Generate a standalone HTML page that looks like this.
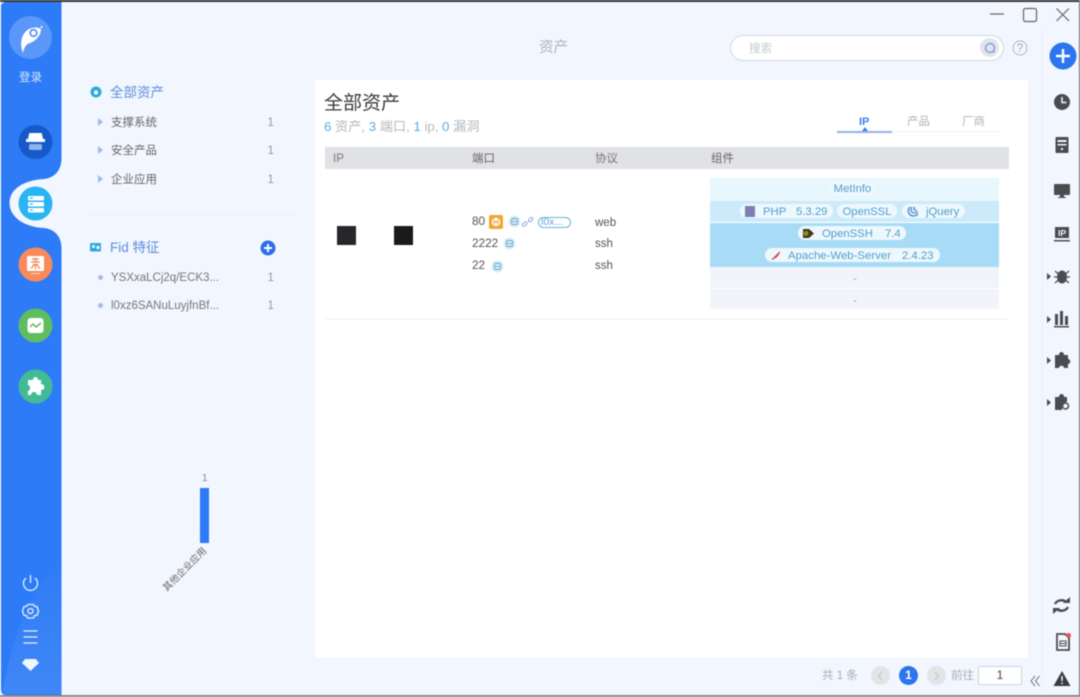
<!DOCTYPE html>
<html lang="zh"><head><meta charset="utf-8"><title>资产</title>
<style>
html,body{margin:0;padding:0;background:#f2f6fe}
body{width:1080px;height:697px;overflow:hidden;position:relative;font-family:"Liberation Sans","Noto Sans CJK SC",sans-serif;color:#5c5c5c}
#r{position:absolute;left:0;top:0;width:1080px;height:697px;overflow:hidden;background:#f2f6fe;filter:blur(.45px)}
.t{position:absolute;white-space:nowrap;line-height:16px;font-size:11.500px;margin-top:1px}
.a{position:absolute}
.c{border-radius:50%}
.pill{position:absolute;height:14px;background:#edf8fe;border-radius:7px;color:#4f9fca;font-size:11.300px;line-height:16px;white-space:nowrap;text-align:center}
svg{position:absolute;overflow:visible}
</style></head><body><div id="r">
<div class="a" style="left:0;top:0;width:1080px;height:2px;background:#333"></div>
<div class="a" style="left:0;top:695px;width:1080px;height:2px;background:#8a8a8a"></div>
<div class="a" style="left:1079px;top:0;width:1px;height:697px;background:#666"></div>
<div class="a" style="left:1042px;top:30px;width:1px;height:664px;background:#ebf0f8"></div>

<svg style="left:0;top:0" width="62" height="697" viewBox="0 0 62 697">
<defs><linearGradient id="w" x1="0" y1="0" x2="0" y2="1"><stop offset="0" stop-color="#fff" stop-opacity=".01"/><stop offset="1" stop-color="#fff" stop-opacity=".09"/></linearGradient></defs>
<path fill="#2d7bf6" d="M6 2H61.500V158C61.500 171 54 178 44 179C24 180 9.500 189 9.500 203C9.500 217 24 227 44 228C54 229 61.500 236 61.500 248V695H6Q1 695 1 689V7Q1 2 6 2Z"/>
<path fill="url(#w)" d="M3 690C12 640 28 590 61 560V694H6Z"/>
<circle cx="30.500" cy="37.500" r="21.500" fill="#5a97f8"/>
<path fill="#fff" d="M23 53C19 42 22 33 29 29C33 27 38 27 41 29C41 35 36 41 30 43C26 44 24 48 23 53Z"/>
<circle cx="33.500" cy="33" r="3.300" fill="none" stroke="#5a97f8" stroke-width="1.800"/>
<circle cx="41.500" cy="27" r="1" fill="#fff"/>
<circle cx="35.500" cy="142" r="17" fill="#1659c9"/>
<path fill="#fff" d="M30 133H41Q42 133 42 134L43 139H45V142H26V139H28L29 134Q29 133 30 133Z"/>
<rect x="29" y="144" width="13" height="6" rx="1.500" fill="#8fb3ec"/>
<circle cx="35.500" cy="203.500" r="17" fill="#29b5f2"/>
<g fill="#fff"><rect x="28" y="196" width="16" height="4.500" rx="1"/><rect x="28" y="202" width="16" height="4.500" rx="1"/><rect x="28" y="208" width="16" height="4.500" rx="1"/></g>
<g fill="#29b5f2"><rect x="30" y="197.500" width="3" height="1.200"/><rect x="30" y="203.500" width="3" height="1.200"/><rect x="30" y="209.500" width="3" height="1.200"/></g>
<circle cx="35.500" cy="264.500" r="17" fill="#fa8a5a"/>
<rect x="27" y="256" width="17" height="15" rx="1.500" fill="#fff"/>
<path d="M32 259H39M35.500 258V262M31 262H40M33 264.500L38 264.500M31 268.500L34 265M40 268.500L37 265M35.500 264V269" stroke="#f47f46" stroke-width="1.200" fill="none"/>
<rect x="31" y="273" width="9" height="1" fill="#fff" opacity=".7"/>
<circle cx="35.500" cy="325.500" r="17" fill="#5fbd60"/>
<rect x="27.500" y="318" width="16" height="15" rx="3" fill="#fff"/>
<path d="M30 327L33 324L36 327L41 323" fill="none" stroke="#5fbd60" stroke-width="1.500"/>
<circle cx="35.500" cy="386.500" r="17" fill="#42bb95"/>
<path fill="#fff" d="M28 380H33C33 376 38 376 38 380H41V384C45 384 46 390 41 390V395H37C37 391 31 391 31 395H28V391C31 390 31 386 28 385Z"/>
<g fill="none" stroke="#e8f1ff" stroke-width="1.300">
<path d="M26 578A7 7 0 1 0 35 578M30.500 575V583"/>
<path d="M27.500 604.500H33.500L34.500 606.500L37 606.500L38.500 611L37 615.500L34.500 615.500L33.500 618H27.500L26.500 615.500L24 615.500L22.500 611L24 606.500L26.500 606.500Z" stroke-linejoin="round"/>
<circle cx="30.500" cy="611" r="2.500"/>
<path d="M23.500 631H37.500M23.500 637H37.500M23.500 643H37.500"/>
</g>
<path fill="#f0f5ff" d="M25 659H36L39 663L30.500 671L22 663Z"/>
</svg>
<div class="t" style="left:18px;top:69px;width:25px;text-align:center;color:#d9e7fd;font-size:11.500px">登录</div>

<svg style="left:90px;top:86px" width="12" height="12"><circle cx="6" cy="6" r="5.500" fill="#2ea9dc"/><circle cx="6" cy="6.500" r="2.200" fill="#f2f6fe"/></svg>
<div class="t" style="left:110px;top:84px;color:#5b8fde;font-size:13.500px">全部资产</div>
<div class="a" style="left:98px;top:118px;border-left:5px solid #9dbcea;border-top:4px solid transparent;border-bottom:4px solid transparent"></div>
<div class="a" style="left:98px;top:146px;border-left:5px solid #9dbcea;border-top:4px solid transparent;border-bottom:4px solid transparent"></div>
<div class="a" style="left:98px;top:175px;border-left:5px solid #9dbcea;border-top:4px solid transparent;border-bottom:4px solid transparent"></div>
<div class="t" style="left:111px;top:114px;color:#666">支撑系统</div><div class="t" style="left:267.500px;top:114px;color:#999">1</div>
<div class="t" style="left:111px;top:142px;color:#666">安全产品</div><div class="t" style="left:267.500px;top:142px;color:#999">1</div>
<div class="t" style="left:111px;top:171px;color:#666">企业应用</div><div class="t" style="left:267.500px;top:171px;color:#999">1</div>
<div class="a" style="left:89px;top:214px;width:207px;height:1px;background:#ebeff7"></div>
<svg style="left:90px;top:243px" width="11" height="9"><rect width="11" height="8.500" rx="1" fill="#2ea9dc"/><circle cx="3.500" cy="3.500" r="1.500" fill="#f2f6fe"/><rect x="6.500" y="3" width="3" height="3" fill="#f2f6fe"/></svg>
<div class="t" style="left:110px;top:239px;color:#5b8fde;font-size:13.500px">Fid 特征</div>
<svg style="left:260px;top:240px" width="16" height="16"><circle cx="8" cy="8" r="7.500" fill="#2d6fe8"/><path d="M4 8H12M8 4V12" stroke="#fff" stroke-width="2"/></svg>
<div class="a c" style="left:98px;top:275px;width:5px;height:5px;background:#a3bde8"></div>
<div class="a c" style="left:98px;top:303px;width:5px;height:5px;background:#a3bde8"></div>
<div class="t" style="left:111px;top:269px;color:#777">YSXxaLCj2q/ECK3...</div><div class="t" style="left:267.500px;top:269px;color:#999">1</div>
<div class="t" style="left:111px;top:297px;color:#777">l0xz6SANuLuyjfnBf...</div><div class="t" style="left:267.500px;top:297px;color:#999">1</div>

<div class="t" style="left:202px;top:470px;color:#888;font-size:10px">1</div>
<div class="a" style="left:200px;top:488px;width:9px;height:55px;background:#2d7bf6"></div>
<div class="t" style="left:157px;top:561px;color:#666;font-size:9.500px;transform:rotate(-45deg)">其他企业应用</div>

<div class="t" style="left:539px;top:39px;color:#aeb4bd;font-size:14.500px">资产</div>

<svg style="left:990px;top:6px" width="80" height="18" fill="none" stroke="#666" stroke-width="1.200">
<path d="M0 8H14"/><rect x="33.500" y="2.500" width="13" height="13" rx="2"/><path d="M66.500 2.500L79 15M79 2.500L66.500 15"/></svg>

<div class="a" style="left:730px;top:35px;width:272px;height:24px;background:#fff;border:1px solid #d2d7df;border-radius:13px"></div>
<div class="t" style="left:749px;top:40px;color:#c6c9d0;font-size:11.500px">搜索</div>
<div class="a c" style="left:980px;top:38px;width:19px;height:19px;background:#e1e5ec"></div>
<svg style="left:984px;top:42px" width="12" height="12" fill="none" stroke="#6f92d9" stroke-width="1.200"><circle cx="6" cy="6" r="4.500"/><path d="M9 9L10.500 10.500"/></svg>
<svg style="left:1012px;top:40px" width="16" height="16" fill="none" stroke="#b0b5be"><circle cx="8" cy="8" r="7"/><text x="8" y="12" font-size="11.500" fill="#a4a9b2" stroke="none" text-anchor="middle" font-family="Liberation Sans">?</text></svg>

<div class="a" style="left:315px;top:80px;width:713px;height:578px;background:#fff"></div>
<div class="t" style="left:324px;top:92px;color:#3a3a3a;font-size:19px;line-height:22px">全部资产</div>
<div class="t" style="left:324px;top:118px;color:#b4b8bf;font-size:13.200px"><span style="color:#5aaedd">6</span> 资产, <span style="color:#5aaedd">3</span> 端口, <span style="color:#5aaedd">1</span> ip, <span style="color:#5aaedd">0</span> 漏洞</div>

<div class="a" style="left:837px;top:131px;width:164px;height:1px;background:#eff2f6"></div>
<div class="a" style="left:837px;top:131px;width:55px;height:2px;background:#8db4e8"></div>
<div class="t" style="left:859px;top:113px;color:#3f7ee8;font-weight:bold;font-size:11px">IP</div>
<div class="a" style="left:862px;top:127px;border-bottom:4px solid #3f7ee8;border-left:3px solid transparent;border-right:3px solid transparent"></div>
<div class="t" style="left:907px;top:113px;color:#b0b4bb">产品</div>
<div class="t" style="left:962px;top:113px;color:#b0b4bb">厂商</div>

<div class="a" style="left:325px;top:147px;width:684px;height:22px;background:#e1e2e5"></div>
<div class="t" style="left:333px;top:150px;color:#777">IP</div>
<div class="t" style="left:472px;top:150px;color:#666">端口</div>
<div class="t" style="left:595px;top:150px;color:#777">协议</div>
<div class="t" style="left:711px;top:150px;color:#666">组件</div>

<div class="a" style="left:337px;top:226px;width:19px;height:19px;background:#26262b"></div>
<div class="a" style="left:394px;top:226px;width:19px;height:19px;background:#1a1a1a"></div>

<div class="t" style="left:472px;top:212px;color:#555;font-size:11.800px">80</div>
<svg style="left:489px;top:215px" width="14" height="14"><rect width="14" height="14" rx="2" fill="#f6a534"/><path d="M7 2.500L11 4.800V9.200L7 11.500L3 9.200V4.800Z" fill="#fff"/><path d="M5 9V5.500L7 7.500L9 5.500V9" fill="none" stroke="#f6a534"/></svg>
<svg style="left:509px;top:216px" width="11" height="11"><circle cx="5.500" cy="5.500" r="6" fill="#d9edf9"/><rect x="2.500" y="2.500" width="6" height="6" rx="1" fill="none" stroke="#69a9cf" stroke-width=".9"/><path d="M3 5.500H8" stroke="#69a9cf" stroke-width=".8"/></svg>
<svg style="left:525px;top:217px" width="9" height="9" fill="none" stroke="#8fa8d8" stroke-width="1"><rect x="-1" y="1" width="5" height="3" rx="1.500" transform="rotate(-45 1.500 6) translate(-2 3)"/><rect x="3.500" y="1" width="5" height="3" rx="1.500" transform="rotate(-45 6 3)"/></svg>
<div class="a" style="left:538px;top:217px;width:29px;height:9px;border:1px solid #62b5dd;border-radius:6px;color:#62a9cf;font-size:10.500px;line-height:9px;padding-left:2px;white-space:nowrap;overflow:hidden">l0x...</div>
<div class="t" style="left:472px;top:234px;color:#555;font-size:11.800px">2222</div>
<svg style="left:504px;top:238px" width="11" height="11"><circle cx="5.500" cy="5.500" r="6" fill="#d9edf9"/><rect x="2.500" y="2.500" width="6" height="6" rx="1" fill="none" stroke="#69a9cf" stroke-width=".9"/><path d="M3 5.500H8" stroke="#69a9cf" stroke-width=".8"/></svg>
<div class="t" style="left:472px;top:256px;color:#555;font-size:11.800px">22</div>
<svg style="left:492px;top:261px" width="11" height="11"><circle cx="5.500" cy="5.500" r="6" fill="#d9edf9"/><rect x="2.500" y="2.500" width="6" height="6" rx="1" fill="none" stroke="#69a9cf" stroke-width=".9"/><path d="M3 5.500H8" stroke="#69a9cf" stroke-width=".8"/></svg>
<div class="t" style="left:595px;top:214px;color:#555">web</div>
<div class="t" style="left:595px;top:235px;color:#555">ssh</div>
<div class="t" style="left:595px;top:257px;color:#555">ssh</div>

<div class="a" style="left:710px;top:178px;width:289px;height:23px;background:#e8f6fd"></div>
<div class="a" style="left:710px;top:201px;width:289px;height:21px;background:#cdeafa"></div>
<div class="a" style="left:710px;top:223px;width:289px;height:44px;background:#a8dcf6"></div>
<div class="a" style="left:710px;top:267px;width:289px;height:21px;background:#f1f5fb"></div>
<div class="a" style="left:710px;top:289px;width:289px;height:20px;background:#f1f5fb"></div>

<div class="pill" style="left:828px;top:181px;width:49px">MetInfo</div>
<div class="pill" style="left:740px;top:204px;width:93px"></div>
<div class="a" style="left:745px;top:206px;width:10px;height:11px;background:#7b7fb5"></div>
<div class="t" style="left:763px;top:203px;color:#4f9fca;font-size:11.300px">PHP</div>
<div class="t" style="left:796px;top:203px;color:#4f9fca;font-size:11.300px">5.3.29</div>
<div class="pill" style="left:837px;top:204px;width:60px">OpenSSL</div>
<div class="pill" style="left:902px;top:204px;width:63px"></div>
<svg style="left:907px;top:206px" width="11" height="11" fill="none" stroke="#5f94c8" stroke-width="1.500"><path d="M3 1C0 4 1 9 6 10C8 10 10 9 11 8M5 1C3 4 4 7 8 7C9 7 10 6.500 11 6M7.500 1C6.500 3 7 4.500 10 4.500"/></svg>
<div class="t" style="left:926px;top:203px;color:#4f9fca;font-size:11.300px">jQuery</div>
<div class="pill" style="left:798px;top:226px;width:108px"></div>
<svg style="left:803px;top:228px" width="11" height="11"><path d="M0 1H6L11 5.500L6 10H0Z" fill="#3d3a16"/><circle cx="3" cy="5.500" r="2.500" fill="#9a8a1c"/></svg>
<div class="t" style="left:822px;top:225px;color:#4f9fca;font-size:11.300px">OpenSSH</div>
<div class="t" style="left:885px;top:225px;color:#4f9fca;font-size:11.300px">7.4</div>
<div class="pill" style="left:765px;top:248px;width:175px"></div>
<svg style="left:771px;top:251px" width="10" height="9"><path d="M0 9L9 0C9 4 5 8 0 9Z" fill="#d8434b"/></svg>
<div class="t" style="left:788px;top:247px;color:#4f9fca;font-size:11.400px">Apache-Web-Server</div>
<div class="t" style="left:902px;top:247px;color:#4f9fca;font-size:11.300px">2.4.23</div>
<div class="t" style="left:853px;top:270px;color:#aaa">-</div>
<div class="t" style="left:853px;top:292px;color:#aaa">-</div>
<div class="a" style="left:325px;top:319px;width:684px;height:1px;background:#eef0f3"></div>

<svg style="left:1048px;top:42px" width="30" height="30"><circle cx="15" cy="14" r="13.500" fill="#2d74ee"/><path d="M8 14H22M15 7V21" stroke="#fff" stroke-width="2.400"/></svg>
<svg style="left:1050px;top:90px" width="30" height="330" fill="#4a4c50">
<circle cx="12" cy="12" r="8"/><path d="M12 7V12.500H16.500" fill="none" stroke="#f2f6fe" stroke-width="1.500"/>
<rect x="5.500" y="47" width="13" height="16" rx="1"/><rect x="7.500" y="50" width="9" height="2" fill="#f2f6fe"/><rect x="7.500" y="54" width="9" height="1.500" fill="#f2f6fe"/><rect x="11" y="58" width="2" height="2" fill="#f2f6fe"/>
<rect x="4" y="94" width="16" height="11" rx="1"/><path d="M10 105H14V107H16V108H8V107H10Z"/>
<rect x="5" y="137" width="14" height="11"/><rect x="4" y="150" width="16" height="1.500"/>
<text x="12" y="146" font-size="8.500" font-weight="bold" fill="#f2f6fe" text-anchor="middle" font-family="Liberation Sans">IP</text>
<path d="M-3 183L1 186.500L-3 190Z"/><ellipse cx="12" cy="187" rx="5" ry="6.500"/><path d="M5 181L19 193M19 181L5 193M4 187H20" stroke="#4a4c50" stroke-width="1.200"/>
<path d="M-3 226L1 229.500L-3 233Z"/><rect x="5" y="224" width="3" height="11"/><rect x="10" y="221" width="3" height="14"/><rect x="15" y="226" width="3" height="9"/><rect x="4" y="236" width="15" height="1.500"/>
<path d="M-3 267L1 270.500L-3 274Z"/><path d="M5 265H9C9 261 14 261 14 265H18V269C21 269 21 274 18 274V278H14C14 275 9 275 9 278H5Z"/>
<path d="M-3 309L1 312.500L-3 316Z"/><path d="M5 307H9C9 303 14 303 14 307H17V312C14 312 12 315 12 320H5Z"/><circle cx="15.500" cy="316" r="3" fill="none" stroke="#4a4c50" stroke-width="1.500"/>
</svg>
<svg style="left:1052px;top:596px" width="24" height="92" fill="none" stroke="#4a4c50">
<path d="M3 8C5 4 11 3 14 6M16 11C14 15 8 16 5 13" stroke-width="2.400"/><path d="M11 7H18V1Z M8 12H1V18Z" fill="#4a4c50" stroke="none"/>
<path d="M5 38H13L17 42V54H5Z" stroke-width="1.800"/><path d="M8 45H14V50H8ZM8 47.500H14" stroke-width="1"/>
<path d="M10 75L18.500 90H1.500Z" fill="#3a3c40" stroke="none"/><path d="M10 80V85M10 86.500V88" stroke="#f2f6fe" stroke-width="1.500"/>
</svg>
<div class="a c" style="left:1066px;top:633px;width:5px;height:5px;background:#ef5350"></div>

<div class="t" style="left:822px;top:667px;color:#a9adb4;font-size:11.500px">共 1 条</div>
<div class="a c" style="left:871px;top:666px;width:19px;height:19px;background:#e3e4e7"></div>
<div class="a c" style="left:899px;top:666px;width:19px;height:19px;background:#2d74ee;color:#fff;font-size:12px;font-weight:bold;line-height:19px;text-align:center">1</div>
<div class="a c" style="left:927px;top:666px;width:19px;height:19px;background:#e3e4e7"></div>
<svg style="left:877px;top:671px" width="70" height="10" fill="none" stroke="#c4c6cb" stroke-width="1.300"><path d="M5 1L1.500 5L5 9M58 1L61.500 5L58 9"/></svg>
<div class="t" style="left:951px;top:667px;color:#a9adb4;font-size:11.500px">前往</div>
<div class="a" style="left:978px;top:666px;width:42px;height:17px;background:#fff;border:1px solid #cfd3da;border-radius:2px;color:#444;font-size:12px;line-height:17px;text-align:center">1</div>
<svg style="left:1030px;top:675px" width="12" height="12" fill="none" stroke="#6a7078" stroke-width="1"><path d="M5 1L1 6L5 11M9.500 1L5.500 6L9.500 11"/></svg>
</div></body></html>
